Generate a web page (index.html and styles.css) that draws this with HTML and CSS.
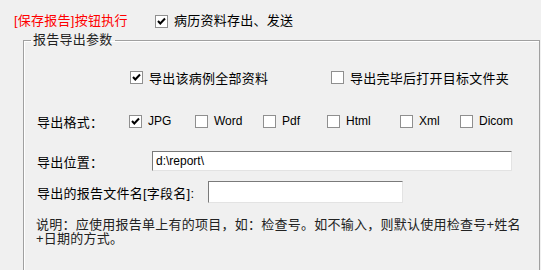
FILE: index.html
```html
<!DOCTYPE html>
<html lang="zh-CN">
<head>
    <meta charset="UTF-8">
    <title>报告导出参数</title>
    <link rel="stylesheet" href="styles.css">
</head>
<body>

<div class="top-row">
    <span class="note-red">[保存报告]按钮执行</span>
    <label class="check">
        <span class="box"><svg width="11" height="11" viewBox="0 0 11 11"><path d="M2 5 L4.3 7.5 L9 2.5" fill="none" stroke="#000" stroke-width="2"/></svg></span>
        <span>病历资料存出、发送</span>
    </label>
</div>

<fieldset class="group">
    <legend>报告导出参数</legend>

    <div class="row row-all">
        <span></span>
        <label class="check">
            <span class="box"><svg width="11" height="11" viewBox="0 0 11 11"><path d="M2 5 L4.3 7.5 L9 2.5" fill="none" stroke="#000" stroke-width="2"/></svg></span>
            <span>导出该病例全部资料</span>
        </label>
        <label class="check">
            <span class="box"></span>
            <span>导出完毕后打开目标文件夹</span>
        </label>
    </div>

    <div class="row row-format">
        <span>导出格式：</span>
        <label class="check latin">
            <span class="box"><svg width="11" height="11" viewBox="0 0 11 11"><path d="M2 5 L4.3 7.5 L9 2.5" fill="none" stroke="#000" stroke-width="2"/></svg></span>
            <span>JPG</span>
        </label>
        <label class="check latin"><span class="box"></span><span>Word</span></label>
        <label class="check latin"><span class="box"></span><span>Pdf</span></label>
        <label class="check latin"><span class="box"></span><span>Html</span></label>
        <label class="check latin"><span class="box"></span><span>Xml</span></label>
        <label class="check latin"><span class="box"></span><span>Dicom</span></label>
    </div>

    <div class="row row-path">
        <span>导出位置：</span>
        <input class="field field-path" type="text" value="d:\report\">
    </div>

    <div class="row row-name">
        <span>导出的报告文件名[字段名]:</span>
        <input class="field field-name" type="text" value="">
    </div>

    <p class="desc">说明：应使用报告单上有的项目，如：检查号。如不输入，则默认使用检查号+姓名+日期的方式。</p>
</fieldset>

</body>
</html>
```

FILE: styles.css
```css
body {
    margin: 0;
    background-color: #f0f0f0;
    font-family: "Liberation Sans", "Noto Sans CJK SC", sans-serif;
    font-size: 13px;
    letter-spacing: 0.25px;
    color: #000;
}

.top-row {
    display: grid;
    grid-template-columns: 141px auto;
    align-items: center;
    height: 32px;
    padding: 10px 0 0 14px;
    box-sizing: border-box;
}

.top-row > * {
    line-height: 16px;
    height: 16px;
}

.note-red {
    color: #ff0000;
}

/* checkbox + caption */
.check {
    display: inline-flex;
    align-items: center;
    gap: 6px;
    white-space: nowrap;
}

.box {
    width: 11px;
    height: 11px;
    border: 1px solid #8f8f8f;
    background-color: #fff;
    display: inline-flex;
    flex: none;
}

.latin {
    font-size: 12px;
    letter-spacing: 0;
}

/* group box */
.group {
    margin: 0 1px 0 23px;
    padding: 0 0 27px 13px;
    border: 1px solid #a0a0a0;
    box-shadow: inset 1px 1px 0 #fff;
}

.group legend {
    margin-left: -6px;
    padding: 0 2px;
    line-height: 16px;
    color: #222;
}

.row {
    display: grid;
    align-items: center;
    height: 20px;
}

.row-all {
    grid-template-columns: 93px 201px auto;
    margin-top: 19px;
}

.row-format {
    grid-template-columns: 92px 66px 68px 64px 73px 60px auto;
    margin-top: 24px;
}

.row-path {
    grid-template-columns: 115px auto;
    margin-top: 20px;
}

.row-name {
    grid-template-columns: 171px auto;
    height: 22px;
    margin-top: 10px;
}

.field {
    box-sizing: border-box;
    margin: 0;
    padding: 0 3px;
    border: 1px solid;
    border-color: #7a7a7a #e3e3e3 #e3e3e3 #7a7a7a;
    background-color: #fff;
    font-family: "Liberation Sans", sans-serif;
    font-size: 12px;
    color: #000;
    outline: none;
}

.field-path {
    width: 360px;
    height: 20px;
}

.field-name {
    width: 195px;
    height: 22px;
}

.desc {
    margin: 15px 0 0 -1px;
    width: 492px;
    line-height: 14px;
    color: #222;
}
```
